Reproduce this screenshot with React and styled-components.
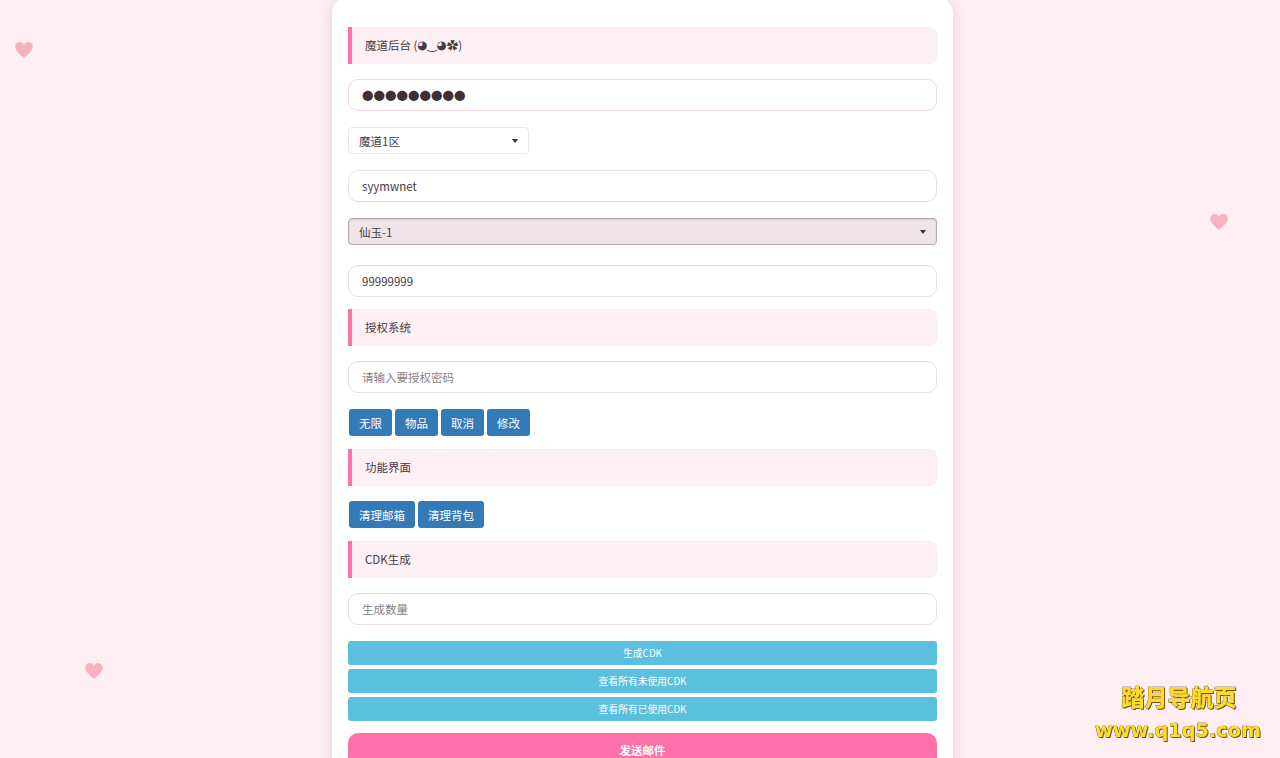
import * as React from 'react';
import styled, { createGlobalStyle } from 'styled-components';

const GlobalStyle = createGlobalStyle`
  html, body {
    margin: 0;
    height: 758px;
    overflow: hidden;
    background: #ffeef4;
  }
  body {
    font-family: "Noto Sans CJK SC", "Noto Sans", sans-serif;
    font-size: 11.5px;
    color: #4a3a42;
  }
`;

const Card = styled.main`
  width: 621px;
  box-sizing: border-box;
  display: flex;
  flex-direction: column;
  margin: -3px 0 0 332px;
  padding: 30px 16px 20px;
  background: #fff;
  border-radius: 16px;
  box-shadow: 0 2px 14px rgba(90, 60, 75, 0.16);
`;

const SectionTitle = styled.div`
  height: 37px;
  flex: none;
  box-sizing: border-box;
  display: flex;
  align-items: center;
  padding: 0 0 2px 13px;
  margin-bottom: 15px;
  background: #fff0f5;
  border-left: 4px solid #ff6fa9;
  border-radius: 0 8px 8px 0;
  box-shadow: inset 0 0 0 1px #fdecf2;
  white-space: pre;
`;

const Kaomoji = styled.span`
  font-family: "DejaVu Sans", sans-serif;
`;

const TextInput = styled.input`
  display: block;
  width: 100%;
  height: 32px;
  flex: none;
  box-sizing: border-box;
  padding: 0 13px;
  margin-bottom: 12px;
  background: #fff;
  border: 1px solid #ecdde3;
  border-radius: 10px;
  outline: none;
  font: inherit;
  font-size: 11.5px;
  color: inherit;

  &::placeholder {
    color: #8a7f84;
  }
`;

const DotsInput = styled(TextInput)`
  border-color: #f3d6e0;
  color: #3f3038;
`;

const Select = styled.div`
  height: 27px;
  flex: none;
  box-sizing: border-box;
  display: flex;
  align-items: center;
  justify-content: space-between;
  padding: 0 10px;
  margin-top: 4px;
  margin-bottom: ${p => p.$after || 16}px;
  width: ${p => (p.$wide ? '100%' : '181px')};
  background: ${p => (p.$wide ? '#efe4e8' : '#fff')};
  border: ${p => (p.$wide ? '1.5px solid #b3aaae' : '1px solid #eee6ea')};
  border-radius: 4px;
  box-shadow: ${p => (p.$wide ? 'inset 0 1px 2px rgba(0, 0, 0, 0.12)' : 'none')};
`;

const Caret = styled.span`
  width: 0;
  height: 0;
  border-left: 3.5px solid transparent;
  border-right: 3.5px solid transparent;
  border-top: 4px solid #333;
`;

const ButtonRow = styled.div`
  display: flex;
  flex: none;
  gap: 3px;
  margin: ${p => (p.$flush ? 0 : 4)}px 0 13px 1px;
`;

const Button = styled.button`
  height: 27px;
  box-sizing: border-box;
  padding: 0 10px;
  background: #337ab7;
  border: 0;
  border-radius: 3px;
  font: inherit;
  color: #fff;
`;

const InfoStack = styled.div`
  display: flex;
  flex: none;
  flex-direction: column;
  gap: 4px;
  margin-top: 4px;
  margin-bottom: 12px;
`;

const InfoButton = styled.button`
  height: 24px;
  padding: 0;
  background: #5bc0de;
  border: 0;
  border-radius: 3px;
  font: inherit;
  font-size: 9.8px;
  color: #fff;
`;

const SendButton = styled.button`
  display: block;
  width: 100%;
  height: 35px;
  flex: none;
  padding: 0 0 2px;
  background: #ff6fa9;
  border: 0;
  border-radius: 10px;
  font: inherit;
  font-weight: 700;
  color: #fff;
`;

const Heart = styled.svg`
  position: fixed;
  left: ${p => p.$x}px;
  top: ${p => p.$y}px;
  width: 20px;
  height: 20px;
  fill: #f8b2bf;
`;

const Watermark = styled.aside`
  position: fixed;
  right: 18px;
  top: 681px;
  width: 168px;
  text-align: center;
  color: #ffd92e;
  font-weight: 900;
  -webkit-text-stroke: 0.7px #5e4a12;
  paint-order: stroke fill;
  text-shadow: 1px 1px 0 #6e5514;
`;

const WatermarkTitle = styled.div`
  padding-left: 2px;
  font-family: "Noto Sans CJK SC", sans-serif;
  font-size: 23px;
  line-height: 30px;
`;

const WatermarkUrl = styled.div`
  margin-top: 6px;
  font-family: "DejaVu Sans", sans-serif;
  font-weight: 700;
  font-size: 19.3px;
  line-height: 28px;
  white-space: nowrap;
`;

function HeartIcon({ x, y }) {
  return (
    <Heart $x={x} $y={y} viewBox="0 0 24 24">
      <path d="M12 21.5 C5 15.5 1.5 12 1.5 7.8 C1.5 4.6 4 2.5 6.9 2.5 C9 2.5 11 3.6 12 5.6 C13 3.6 15 2.5 17.1 2.5 C20 2.5 22.5 4.6 22.5 7.8 C22.5 12 19 15.5 12 21.5 Z" />
    </Heart>
  );
}

export default function App() {
  return (
    <>
      <GlobalStyle />
      <Card>
        <SectionTitle>魔道后台 (<Kaomoji>◕‿◕</Kaomoji>✿)</SectionTitle>
        <DotsInput defaultValue="●●●●●●●●●" />
        <Select>魔道1区<Caret /></Select>
        <TextInput defaultValue="syymwnet" />
        <Select $wide $after={20}>仙玉-1<Caret /></Select>
        <TextInput defaultValue="99999999" />
        <SectionTitle>授权系统</SectionTitle>
        <TextInput placeholder="请输入要授权密码" />
        <ButtonRow>
          <Button>无限</Button>
          <Button>物品</Button>
          <Button>取消</Button>
          <Button>修改</Button>
        </ButtonRow>
        <SectionTitle>功能界面</SectionTitle>
        <ButtonRow $flush>
          <Button>清理邮箱</Button>
          <Button>清理背包</Button>
        </ButtonRow>
        <SectionTitle>CDK生成</SectionTitle>
        <TextInput placeholder="生成数量" />
        <InfoStack>
          <InfoButton>生成CDK</InfoButton>
          <InfoButton>查看所有未使用CDK</InfoButton>
          <InfoButton>查看所有已使用CDK</InfoButton>
        </InfoStack>
        <SendButton>发送邮件</SendButton>
      </Card>
      <HeartIcon x={14} y={40} />
      <HeartIcon x={1209} y={212} />
      <HeartIcon x={84} y={661} />
      <Watermark>
        <WatermarkTitle>踏月导航页</WatermarkTitle>
        <WatermarkUrl>www.q1q5.com</WatermarkUrl>
      </Watermark>
    </>
  );
}
